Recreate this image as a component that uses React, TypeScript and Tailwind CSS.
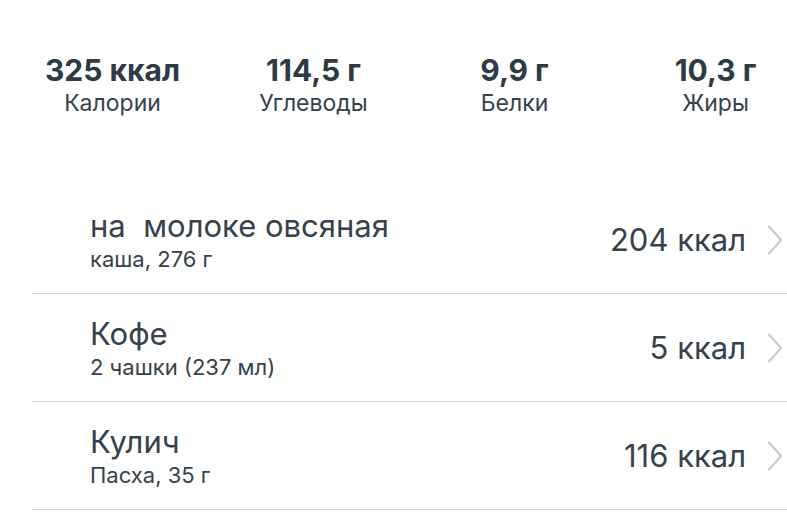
const stats = [
  { value: "325 ккал", label: "Калории" },
  { value: "114,5 г", label: "Углеводы" },
  { value: "9,9 г", label: "Белки" },
  { value: "10,3 г", label: "Жиры" },
];

const items = [
  { title: "на  молоке овсяная", sub: "каша, 276 г", kcal: "204 ккал" },
  { title: "Кофе", sub: "2 чашки (237 мл)", kcal: "5 ккал" },
  { title: "Кулич", sub: "Пасха, 35 г", kcal: "116 ккал" },
];

function Chevron() {
  return (
    <svg width="16" height="30" viewBox="0 0 16 30" fill="none" className="shrink-0">
      <polyline points="2,1.5 14,15 2,28.5" stroke="#c8c8c8" strokeWidth="2" strokeLinecap="round" strokeLinejoin="round" />
    </svg>
  );
}

export default function App() {
  return (
    <div
      className="w-[787px] h-[513px] overflow-hidden bg-white text-[#36424b]"
      style={{ fontFamily: "Inter, 'Noto Sans', sans-serif" }}
    >
      {/* Summary */}
      <div className="flex pl-[12px] pt-[52px]">
        {stats.map((s) => (
          <div key={s.label} className="w-[201px] shrink-0 flex flex-col items-center">
            <div className="text-[30px] leading-[36px] font-bold text-[#2f3b44] whitespace-nowrap">
              {s.value}
            </div>
            <div className="text-[23px] leading-[30px] whitespace-nowrap">{s.label}</div>
          </div>
        ))}
      </div>

      {/* Food list */}
      <div className="mt-[68px] ml-[32px]">
        {items.map((it) => (
          <div
            key={it.title}
            className="h-[108px] flex items-center border-b border-[#d4d4d4] pl-[58px] pr-[4px]"
          >
            <div className="flex-1 min-w-0 pt-[2px]">
              <div className="text-[31px] leading-[36px] whitespace-pre">{it.title}</div>
              <div className="text-[22px] leading-[30px]">{it.sub}</div>
            </div>
            <div className="text-[31px] leading-[36px] whitespace-nowrap mr-[21px]">{it.kcal}</div>
            <Chevron />
          </div>
        ))}
      </div>
    </div>
  );
}
